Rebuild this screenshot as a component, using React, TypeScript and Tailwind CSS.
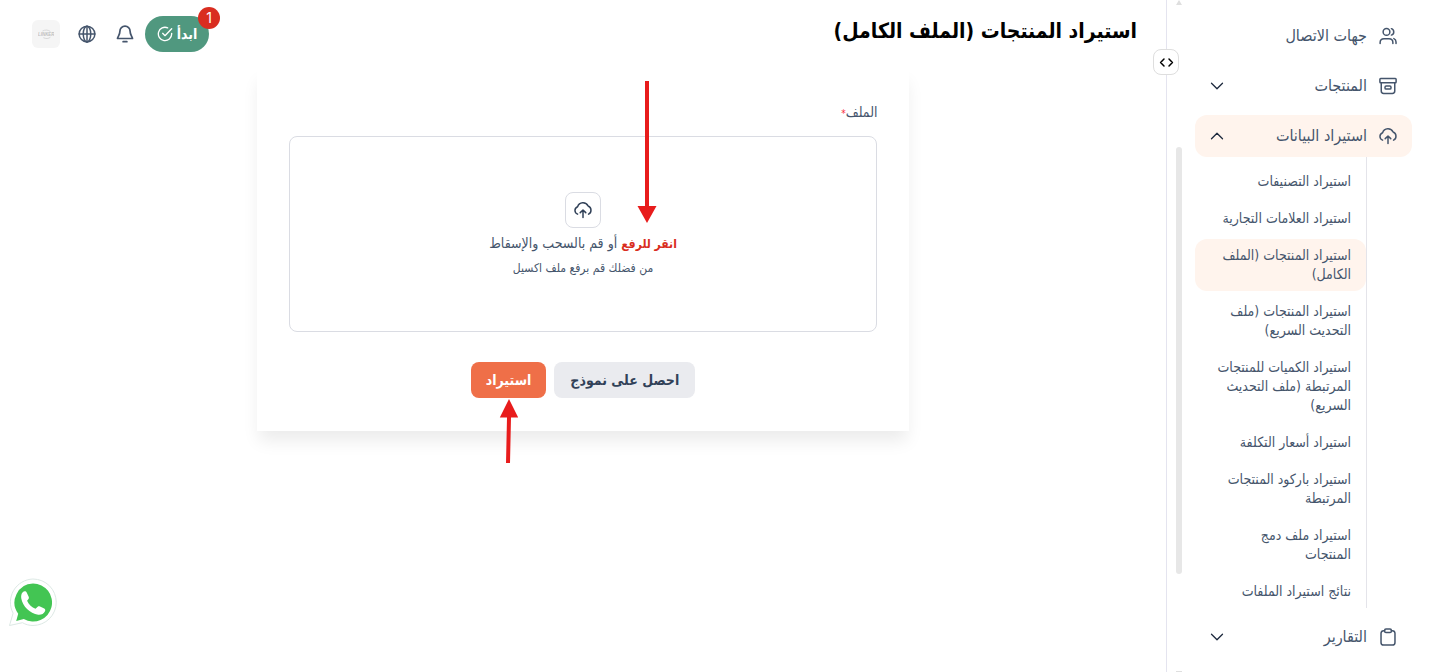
import { ReactNode } from "react";
import clsx from "clsx";
import { ChevronDown, ChevronUp } from "lucide-react";

type NavItemProps = {
  icon: ReactNode;
  label: string;
  expandable?: boolean;
  open?: boolean;
};

const importLinks = [
  "استيراد التصنيفات",
  "استيراد العلامات التجارية",
  "استيراد المنتجات (الملف الكامل)",
  "استيراد المنتجات (ملف التحديث السريع)",
  "استيراد الكميات للمنتجات المرتبطة (ملف التحديث السريع)",
  "استيراد أسعار التكلفة",
  "استيراد باركود المنتجات المرتبطة",
  "استيراد ملف دمج المنتجات",
  "نتائج استيراد الملفات",
];

function Icon({ children, className = "size-[18px]" }: { children: ReactNode; className?: string }) {
  return (
    <svg
      viewBox="0 0 24 24"
      fill="none"
      stroke="currentColor"
      strokeWidth="2"
      strokeLinecap="round"
      strokeLinejoin="round"
      className={clsx("shrink-0", className)}
      aria-hidden="true"
    >
      {children}
    </svg>
  );
}

function CloudIcon({ className }: { className?: string }) {
  return (
    <Icon className={className}>
      <path d="M4.800 17.500A5.200 5.200 0 0 1 1.300 12.500a5.300 5.300 0 0 1 3.500-4.900 7.600 7.600 0 0 1 14-.9 5.900 5.900 0 0 1 .6 10.800" />
      <path d="M12 22v-9.500M8.300 15.500 12 12l3.700 3.500" />
    </Icon>
  );
}

function UsersIcon() {
  return (
    <Icon>
      <circle cx="10" cy="6.500" r="4.500" />
      <path d="M1.500 22v-1.500c0-3 2.400-5 5.200-5h6.600c2.800 0 5.200 2 5.200 5V22" />
      <path d="M16.500 2.200a4.500 4.500 0 0 1 0 8.600M19.800 15.500c1.800.7 2.900 2.400 2.900 4.600V22" />
    </Icon>
  );
}

function ArchiveIcon() {
  return (
    <Icon>
      <rect x="1.200" y="2" width="21.600" height="5.500" rx="1" />
      <path d="M3 7.500v11.300c0 1.900 1.100 3.200 3.200 3.200h11.600c2.100 0 3.200-1.300 3.200-3.200V7.500" />
      <rect x="8" y="12" width="8" height="4" rx="1.500" />
    </Icon>
  );
}

function ClipboardIcon() {
  return (
    <Icon>
      <path d="M7.500 3.500H6.300A3.600 3.600 0 0 0 2.700 7v12.200A3.600 3.600 0 0 0 6.200 22.800h11.600a3.600 3.600 0 0 0 3.500-3.600V7a3.600 3.600 0 0 0-3.600-3.500h-1.200" />
      <rect x="7.500" y="1.200" width="9" height="4.800" rx="1.800" />
    </Icon>
  );
}

function NavItem({ icon, label, expandable, open }: NavItemProps) {
  return (
    <button
      type="button"
      className={clsx(
        "flex h-[42px] w-full items-center gap-3 rounded-xl pr-[15px] pb-px pl-[11px] text-base text-slate-600",
        open && "bg-[#fff4ed]"
      )}
    >
      {icon}
      <span className="flex-1 text-right whitespace-nowrap">{label}</span>
      {expandable &&
        (open ? (
          <ChevronUp className="size-[22px] text-slate-800" strokeWidth={1.4} />
        ) : (
          <ChevronDown className="size-[22px] text-slate-800" strokeWidth={1.4} />
        ))}
    </button>
  );
}

function Sidebar() {
  return (
    <aside className="relative flex w-66 shrink-0 border-l border-[#e4e4ef] bg-white pr-[18px]">
      <nav className="flex min-w-0 flex-1 flex-col gap-2 overflow-hidden pt-[15px]">
        <NavItem icon={<UsersIcon />} label="جهات الاتصال" />
        <NavItem icon={<ArchiveIcon />} label="المنتجات" expandable />
        <div>
          <NavItem icon={<CloudIcon />} label="استيراد البيانات" expandable open />
          <ul className="mr-[45px] flex flex-col gap-1 border-r border-[#e4e4ea] pt-2">
            {importLinks.map((link, i) => (
              <li key={link}>
                <a
                  href="#"
                  className={clsx(
                    "block rounded-xl py-[7px] pr-[15px] pl-5 text-sm leading-[19px] text-slate-600",
                    i === 2 && "bg-[#fff4ed]"
                  )}
                >
                  {link}
                </a>
              </li>
            ))}
          </ul>
        </div>
        <NavItem icon={<ClipboardIcon />} label="التقارير" expandable />
      </nav>
      <div className="mr-[13px] ml-[9px] flex w-[6px] flex-col items-center">
        <div className="border-x-3 border-b-5 border-x-transparent border-b-[#dfdfdf]" />
        <div className="mt-[142px] h-[427px] w-full rounded-full bg-[#e7e7e7]" />
        <div className="mt-auto h-px w-full bg-[#dfdfdf]" />
      </div>
      <button
        type="button"
        aria-label="طي القائمة"
        className="absolute top-[49px] -left-[14px] grid size-[26px] place-items-center rounded-lg border border-[#dedede] bg-white text-black"
      >
        <Icon className="size-[15px]">
          <path d="M8 6.500 2.500 12 8 17.500M16 6.500l5.500 5.500-5.500 5.500" strokeWidth="2.400" />
        </Icon>
      </button>
    </aside>
  );
}

function Header() {
  return (
    <header className="flex h-[68px] items-center justify-between pr-[29px] pl-8">
      <h1 className="pb-1 text-[21px] font-semibold whitespace-nowrap text-black">استيراد المنتجات (الملف الكامل)</h1>
      <div className="flex items-center text-slate-600">
        <button
          type="button"
          className="relative flex h-9 w-16 items-center justify-center gap-1 rounded-full bg-[#50987f] text-sm font-bold text-white"
        >
          <span>ابدأ</span>
          <Icon className="size-4">
            <path d="M22 11v1a10 10 0 1 1-6-9.200M22 4 12 14.500l-3.500-3.500" />
          </Icon>
          <span className="absolute -top-[9px] -right-[11px] grid size-[22px] place-items-center rounded-full bg-[#d92d20] font-[Inter] text-sm font-normal">
            1
          </span>
        </button>
        <button type="button" aria-label="الإشعارات" className="mr-[11px]">
          <Icon>
            <path
              d="M12 1.500A6.800 6.800 0 0 0 5.200 8.300c0 5-2.700 6.700-3.200 9.700h20c-.5-3-3.200-4.700-3.200-9.700A6.800 6.800 0 0 0 12 1.500ZM9.500 22.300h5"
              strokeWidth="2.300"
            />
          </Icon>
        </button>
        <button type="button" aria-label="اللغة" className="mr-5">
          <Icon>
            <circle cx="12" cy="12" r="10.500" />
            <ellipse cx="12" cy="12" rx="5" ry="10.500" />
            <path d="M1.500 12h21M12 1.500v21" />
          </Icon>
        </button>
        <a href="#" aria-label="الحساب" className="mr-[18px] grid size-7 place-items-center rounded-md bg-[#f5f5f5]">
          <svg viewBox="0 0 18 12" className="w-4" fill="none" stroke="#d4d4d4" aria-hidden="true">
            <path d="M5 2.300C8 .6 12 .8 14 3M6 9.800c3 1.500 6 1.200 8-.6" />
            <text x="0" y="8" fontSize="5" fontStyle="italic" fontWeight="bold" fontFamily="Liberation Sans" fill="#c0c0c0" stroke="none" direction="ltr">
              LINKER
            </text>
          </svg>
        </a>
      </div>
    </header>
  );
}

function ImportCard() {
  return (
    <section className="relative mx-auto w-14/25 bg-white px-8 pt-[34px] pb-[33px] shadow-[0_12px_16px_-2px_rgba(0,0,0,0.08)]">
      <label htmlFor="file" className="block h-5 text-sm leading-5 text-slate-600">
        الملف<span className="text-[10px] text-red-500">*</span>
      </label>
      <label
        htmlFor="file"
        className="mt-[14px] flex h-49 cursor-pointer flex-col items-center justify-center rounded-lg border border-[#dadce3] pt-px text-slate-600"
      >
        <span className="grid size-9 place-items-center rounded-lg border border-[#dadce3] text-slate-700">
          <CloudIcon />
        </span>
        <span className="mt-1 h-[22px] text-sm leading-[22px]">
          <span className="text-xs font-semibold text-[#d92d20]">انقر للرفع</span> أو قم بالسحب والإسقاط
        </span>
        <span className="mt-1 text-xs leading-5">من فضلك قم برفع ملف اكسيل</span>
        <input id="file" type="file" className="sr-only" />
      </label>
      <div className="mt-[30px] flex justify-center gap-2">
        <button type="button" className="h-9 rounded-lg bg-[#eaebef] px-4 text-sm font-semibold whitespace-nowrap text-slate-700">
          احصل على نموذج
        </button>
        <button type="button" className="h-9 rounded-lg bg-[#ef6f48] px-[15px] text-sm font-semibold whitespace-nowrap text-white">
          استيراد
        </button>
      </div>
      <svg viewBox="0 0 20 142" className="absolute top-[13px] left-1/2 ml-[54px] h-[142px] w-5" fill="#e81c1c" aria-hidden="true">
        <path d="M8 0h4v125h7.500L10 142 .5 125H8Z" />
      </svg>
      <svg viewBox="0 0 20 64" className="absolute top-[331px] left-1/2 -ml-[84px] h-16 w-5" fill="#e81c1c" aria-hidden="true">
        <path d="m10 0 9.200 18.500H12L11 64H7l1-45.500H.8Z" />
      </svg>
    </section>
  );
}

function WhatsAppLink() {
  return (
    <a href="#" aria-label="WhatsApp" className="fixed bottom-[45px] left-2">
      <svg viewBox="0 0 50 50" className="size-[50px]" aria-hidden="true">
        <path
          d="M25 2a23 23 0 0 1 0 46.500c-4 0-7.500-1-10.500-2.800L1.500 48.500l3.600-12.300A23.300 23.300 0 0 1 25 2Z"
          fill="#fff"
          stroke="#dce8e4"
        />
        <path d="M25 6.500a19 19 0 1 1-9.200 35.600L8.200 44l2-7.300A19 19 0 0 1 25 6.500Z" fill="#43c553" />
        <path
          d="M14.500 15.500c1.500-1.600 3.400-1.600 4.300.2l2 4.200c.3.800.1 1.600-.5 2.300l-1.200 1.500c1.700 3.800 4.800 6.600 8.400 8l2.200-2c.7-.6 1.500-.6 2.300-.2l4.200 1.900c1.200.6 1.300 1.700.8 2.800-1.200 2.600-3.900 3.800-6.800 3.500-8.300-1-15.700-8.600-16.900-16.100-.4-2.400.1-4.900 1.200-6.100Z"
          fill="#fff"
        />
      </svg>
    </a>
  );
}

export default function App() {
  return (
    <div
      dir="rtl"
      className="flex h-screen overflow-hidden bg-white font-['DejaVu_Sans_Condensed','DejaVu_Sans',sans-serif]"
    >
      <Sidebar />
      <main className="min-w-0 flex-1">
        <Header />
        <ImportCard />
      </main>
      <WhatsAppLink />
    </div>
  );
}
